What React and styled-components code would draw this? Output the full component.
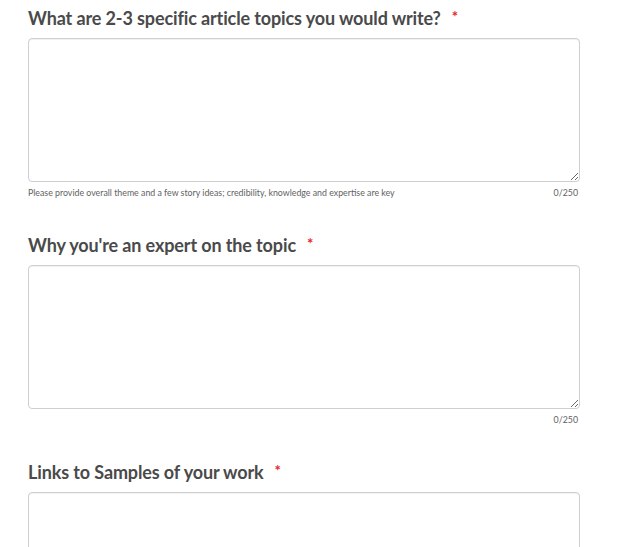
import React from 'react'
import styled, { createGlobalStyle } from 'styled-components'

const GlobalStyle = createGlobalStyle`
html, body {
  margin: 0;
  padding: 0;
  background: #fff;
}
body {
  font-family: Lato, "Open Sans", Arial, sans-serif;
  color: #4a4a4a;
}
`

const StyledForm = styled.form`
width: 552px;
padding: 7px 0 0 28px;
display: flex;
flex-direction: column;
`

const StyledField = styled.div`
display: flex;
flex-direction: column;
margin-bottom: 35px;
`

const StyledLabel = styled.label`
display: flex;
align-items: flex-start;
font-size: 18px;
font-weight: 700;
line-height: 22px;
height: 22px;
color: #4a4a4a;
letter-spacing: -0.12px;
margin-bottom: 9px;
`

const StyledRequired = styled.span`
color: #e4262c;
font-size: 15px;
line-height: 14px;
margin: 2px 0 0 11px;
`

const StyledTextarea = styled.textarea`
box-sizing: border-box;
width: 552px;
height: 144px;
border: 1px solid #cfcfcf;
border-radius: 4px;
box-shadow: inset 0 1px 1px rgba(0, 0, 0, 0.06);
resize: vertical;
font-family: inherit;
font-size: 14px;
padding: 8px;
margin: 0;
display: block;
outline: none;
`

const StyledMeta = styled.div`
display: flex;
justify-content: space-between;
align-items: center;
margin-top: 5px;
font-size: 8.8px;
line-height: 12px;
color: #626262;
`

const StyledCount = styled.span`
margin-left: auto;
padding-right: 2px;
`

function Field({ label, help, counter = true }) {
  return (
    <StyledField>
      <StyledLabel>
        {label}
        <StyledRequired>*</StyledRequired>
      </StyledLabel>
      <StyledTextarea />
      {counter && (
        <StyledMeta>
          {help && <span>{help}</span>}
          <StyledCount>0/250</StyledCount>
        </StyledMeta>
      )}
    </StyledField>
  )
}

export default function App() {
  return (
    <>
      <GlobalStyle />
      <StyledForm>
        <Field
          label="What are 2-3 specific article topics you would write?"
          help="Please provide overall theme and a few story ideas; credibility, knowledge and expertise are key"
        />
        <Field label="Why you're an expert on the topic" />
        <Field label="Links to Samples of your work" />
      </StyledForm>
    </>
  )
}
